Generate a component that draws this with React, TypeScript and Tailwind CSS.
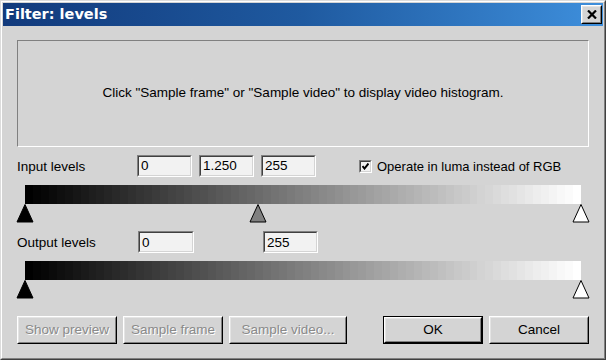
import React from 'react';

const BANDS = Array.from({ length: 70 }, (_, i) => Math.round((i * 255) / 69));

// Raised 3D push button (classic Windows look)
const Btn: React.FC<{ label: string; width: string; disabled?: boolean; isDefault?: boolean }> = ({
  label,
  width,
  disabled,
  isDefault,
}) => (
  <div className={`${width} h-[28px] ${isDefault ? 'border border-black' : ''}`}>
    <div className="h-full border border-white border-r-black border-b-black">
      <div className="h-full border border-[#e4e4e4] border-r-[#808080] border-b-[#808080] flex items-center justify-center bg-[#d4d4d4]">
        <span
          className={`text-[13.5px] leading-none ${
            disabled ? 'text-[#8a8a8a] [text-shadow:1px_1px_0_#ffffff]' : 'text-black'
          }`}
        >
          {label}
        </span>
      </div>
    </div>
  </div>
);

// Sunken edit box
const Field: React.FC<{ value: string; width: string }> = ({ value, width }) => (
  <div className={`${width} h-[22px] border border-[#808080] border-r-white border-b-white`}>
    <div className="h-full border border-[#404040] border-r-[#d4d4d4] border-b-[#d4d4d4] bg-[#f2f2f2] flex items-center pl-[2px]">
      <span className="text-[13.5px] leading-none text-black">{value}</span>
    </div>
  </div>
);

const Tri: React.FC<{ left: number; fill: string }> = ({ left, fill }) => (
  <svg
    className="absolute top-0"
    style={{ left }}
    width="18"
    height="19"
    viewBox="0 0 18 19"
  >
    <polygon points="9,0.5 17,18 1,18" fill={fill} stroke="#000" strokeWidth="1" />
  </svg>
);

const Slider: React.FC<{ marks: { left: number; fill: string }[] }> = ({ marks }) => (
  <div className="ml-[8px] w-[556px]">
    <div className="h-[19px] flex">
      {BANDS.map((v, i) => (
        <div key={i} className="flex-1" style={{ backgroundColor: `rgb(${v},${v},${v})` }} />
      ))}
    </div>
    <div className="relative h-[19px]">
      {marks.map((m, i) => (
        <Tri key={i} left={m.left} fill={m.fill} />
      ))}
    </div>
  </div>
);

export default function App() {
  return (
    <div className="w-[606px] h-[360px] bg-[#d4d4d4] border border-[#dcdcdc] border-r-[#404040] border-b-[#404040] [font-family:'Liberation_Sans',Arial,sans-serif] text-black">
      <div className="h-full border border-white border-r-[#808080] border-b-[#808080] p-px flex flex-col">
        {/* title bar */}
        <div className="h-[23px] flex items-center justify-between pl-[2px] pr-[1px] bg-gradient-to-r from-[#123a7c] via-[#1f5aa0] to-[#3e8fdc]">
          <span className="text-white font-bold text-[14.5px] [font-family:'DejaVu_Sans',sans-serif]">
            Filter: levels
          </span>
          <div className="w-[21px] h-[19px] border border-white border-r-black border-b-black">
            <div className="h-full border border-[#e4e4e4] border-r-[#808080] border-b-[#808080] bg-[#d4d4d4] flex items-center justify-center">
              <svg width="10" height="9" viewBox="0 0 10 9">
                <path d="M1 0.5 L9 8.5 M9 0.5 L1 8.5" stroke="#000" strokeWidth="2.2" />
              </svg>
            </div>
          </div>
        </div>

        {/* content */}
        <div className="px-[14px] pt-[14px] flex flex-col">
          <div className="h-[107px] border border-[#808080] border-r-white border-b-white flex items-center justify-center">
            <span className="text-[13.5px]">
              Click "Sample frame" or "Sample video" to display video histogram.
            </span>
          </div>

          <div className="mt-[7px] flex items-center">
            <span className="w-[120px] mt-[3px] text-[13.5px]">Input levels</span>
            <div className="flex gap-[7px]">
              <Field value="0" width="w-[55px]" />
              <Field value="1.250" width="w-[55px]" />
              <Field value="255" width="w-[55px]" />
            </div>
            <div className="ml-[43px] mt-[1px] flex items-center gap-[5px]">
              <div className="w-[13px] h-[13px] border border-[#808080] border-r-white border-b-white">
                <div className="w-full h-full border border-[#404040] border-r-[#d4d4d4] border-b-[#d4d4d4] bg-[#f2f2f2] flex items-center justify-center">
                  <svg width="7" height="7" viewBox="0 0 7 7">
                    <path d="M0.5 3 L2.5 5.5 L6.5 0.5" fill="none" stroke="#000" strokeWidth="2" />
                  </svg>
                </div>
              </div>
              <span className="text-[13px] mt-[1px]">Operate in luma instead of RGB</span>
            </div>
          </div>

          <div className="mt-[8px]">
            <Slider
              marks={[
                { left: -9, fill: '#000' },
                { left: 224, fill: '#808080' },
                { left: 547, fill: '#fff' },
              ]}
            />
          </div>

          <div className="mt-[8px] flex items-center">
            <span className="w-[121px] mt-[2px] text-[13.5px]">Output levels</span>
            <Field value="0" width="w-[56px]" />
            <div className="ml-[69px]">
              <Field value="255" width="w-[55px]" />
            </div>
          </div>

          <div className="mt-[7px]">
            <Slider
              marks={[
                { left: -9, fill: '#000' },
                { left: 547, fill: '#fff' },
              ]}
            />
          </div>

          <div className="mt-[17px] flex items-center">
            <div className="flex gap-[6px]">
              <Btn label="Show preview" width="w-[100px]" disabled />
              <Btn label="Sample frame" width="w-[100px]" disabled />
              <Btn label="Sample video..." width="w-[118px]" disabled />
            </div>
            <div className="ml-auto flex gap-[6px]">
              <Btn label="OK" width="w-[100px]" isDefault />
              <Btn label="Cancel" width="w-[100px]" />
            </div>
          </div>
        </div>
      </div>
    </div>
  );
}
